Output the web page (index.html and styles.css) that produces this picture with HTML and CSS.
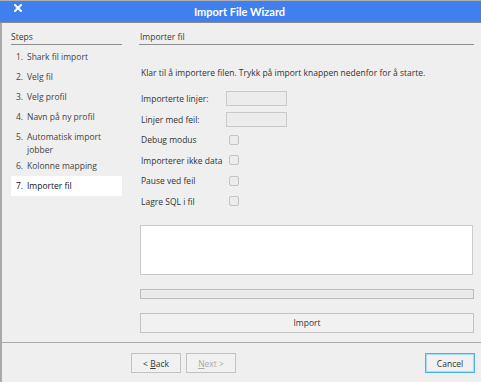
FILE: index.html
```html
<!DOCTYPE html>
<html lang="nb">
<head>
    <meta charset="UTF-8">
    <meta name="viewport" content="width=device-width, initial-scale=1.0">
    <title>Import File Wizard</title>
    <link rel="stylesheet" href="styles.css">
</head>
<body>
    <div class="window">
        <div class="titlebar">
            <span class="close">
                <svg width="8" height="8" viewBox="0 0 8 8">
                    <path d="M1 1 L7 7 M7 1 L1 7" stroke="#fff" stroke-width="2" stroke-linecap="square" fill="none"/>
                </svg>
            </span>
            <span class="title">Import File Wizard</span>
        </div>

        <div class="main">
            <aside class="steps">
                <div class="section-head">Steps</div>
                <ol class="step-list">
                    <li class="step"><span class="num">1.</span><span class="label">Shark fil import</span></li>
                    <li class="step"><span class="num">2.</span><span class="label">Velg fil</span></li>
                    <li class="step"><span class="num">3.</span><span class="label">Velg profil</span></li>
                    <li class="step"><span class="num">4.</span><span class="label">Navn på ny profil</span></li>
                    <li class="step step-wrap"><span class="num">5.</span><span class="label">Automatisk import jobber</span></li>
                    <li class="step"><span class="num">6.</span><span class="label">Kolonne mapping</span></li>
                    <li class="step active"><span class="num">7.</span><span class="label">Importer fil</span></li>
                </ol>
            </aside>

            <section class="content">
                <div class="section-head">Importer fil</div>
                <p class="intro">Klar til å importere filen. Trykk på import knappen nedenfor for å starte.</p>

                <div class="fields">
                    <span class="field-label">Importerte linjer:</span>
                    <span class="text-box"></span>
                    <span class="field-label">Linjer med feil:</span>
                    <span class="text-box"></span>
                    <span class="field-label">Debug modus</span>
                    <span class="check"></span>
                    <span class="field-label">Importerer ikke data</span>
                    <span class="check"></span>
                    <span class="field-label">Pause ved feil</span>
                    <span class="check"></span>
                    <span class="field-label">Lagre SQL i fil</span>
                    <span class="check"></span>
                </div>

                <div class="log"></div>
                <div class="progress"></div>
                <button class="btn import-btn">Import</button>
            </section>
        </div>

        <div class="footer">
            <button class="btn nav-btn">&lt; <u>B</u>ack</button>
            <button class="btn nav-btn disabled"><u>N</u>ext &gt;</button>
            <span class="spacer"></span>
            <button class="btn nav-btn focused">Cancel</button>
        </div>
    </div>
</body>
</html>
```

FILE: styles.css
```css
* {
    margin: 0;
    padding: 0;
    box-sizing: border-box;
}

body {
    font-family: "Open Sans", "Noto Sans", sans-serif;
    font-size: 8.5px;
    color: #333;
    background-color: #efefef;
    width: 481px;
    height: 382px;
    overflow: hidden;
}

.window {
    height: 382px;
    border-left: 2px solid #a9a9a9;
    display: flex;
    flex-direction: column;
}

.titlebar {
    height: 23px;
    background-color: #4080ee;
    border-top: 1px solid #b0b0b0;
    border-bottom: 1px solid #8a8a8a;
    margin-left: -2px;
    display: flex;
    align-items: center;
    justify-content: center;
    position: relative;
}

.close {
    position: absolute;
    left: 14px;
    top: 3px;
    width: 8px;
    height: 8px;
}

.close svg {
    display: block;
}

.title {
    font-family: Lato, "Open Sans", sans-serif;
    font-weight: bold;
    font-size: 11px;
    color: #fff;
    margin-left: -2px;
}

.main {
    flex: 1;
    display: flex;
    padding: 0 7px 0 9px;
    gap: 18px;
    border-bottom: 1px solid #a8a8a8;
}

.steps {
    width: 111px;
}

.content {
    flex: 1;
    display: flex;
    flex-direction: column;
}

.section-head {
    padding-top: 7px;
    line-height: 13px;
    padding-bottom: 1px;
    border-bottom: 1px solid #8f8f8f;
    color: #3a3a3a;
}

.content .section-head {
    margin-left: -1px;
    padding-left: 1px;
}

.step-list {
    list-style: none;
    margin-top: 2px;
}

.step {
    display: flex;
    line-height: 13px;
    padding: 3px 0 4px 5px;
    color: #444;
}

.step-wrap {
    margin-bottom: -4px;
}

.step .num {
    width: 11px;
    flex-shrink: 0;
}

.step .label {
    width: 80px;
}

.step.active {
    background-color: #fff;
    color: #111;
}

.intro {
    margin-top: 21px;
    margin-left: 1px;
    line-height: 13px;
}

.fields {
    margin-top: 12px;
    display: grid;
    grid-template-columns: 86px 61px;
    grid-auto-rows: 15px;
    row-gap: 5.5px;
    align-items: center;
}

.field-label {
    padding-left: 1px;
    line-height: 13px;
}

.text-box {
    height: 15px;
    border: 1px solid #c9c9c9;
    background-color: #ececec;
}

.check {
    width: 10px;
    height: 10px;
    margin-left: 3px;
    border: 1px solid #c4c4c4;
    border-radius: 2px;
    background-color: #ececec;
}

.log {
    margin-top: 16px;
    height: 50px;
    margin-right: 1px;
    background-color: #fff;
    border: 1px solid #cacaca;
}

.progress {
    margin-top: 14px;
    height: 10px;
    border: 1px solid #bdbdbd;
    background-color: #e9e9e9;
}

.btn {
    font-family: "Open Sans", "Noto Sans", sans-serif;
    font-size: 8.5px;
    color: #333;
    background-color: #f1f1f1;
    border: 1px solid #c2c2c2;
    height: 20px;
}

.import-btn {
    margin-top: 14px;
    width: 100%;
}

.footer {
    height: 39px;
    display: flex;
    align-items: flex-start;
    padding: 10px 6px 0 129px;
    gap: 5px;
}

.nav-btn {
    width: 50px;
}

.nav-btn u {
    text-decoration-thickness: 1px;
    text-underline-offset: 1px;
}

.nav-btn.disabled {
    color: #aaa;
}

.spacer {
    flex: 1;
}

.nav-btn.focused {
    border: 1px solid #4cb2ea;
    box-shadow: inset 0 0 0 1px #a8d9f5;
}
```
